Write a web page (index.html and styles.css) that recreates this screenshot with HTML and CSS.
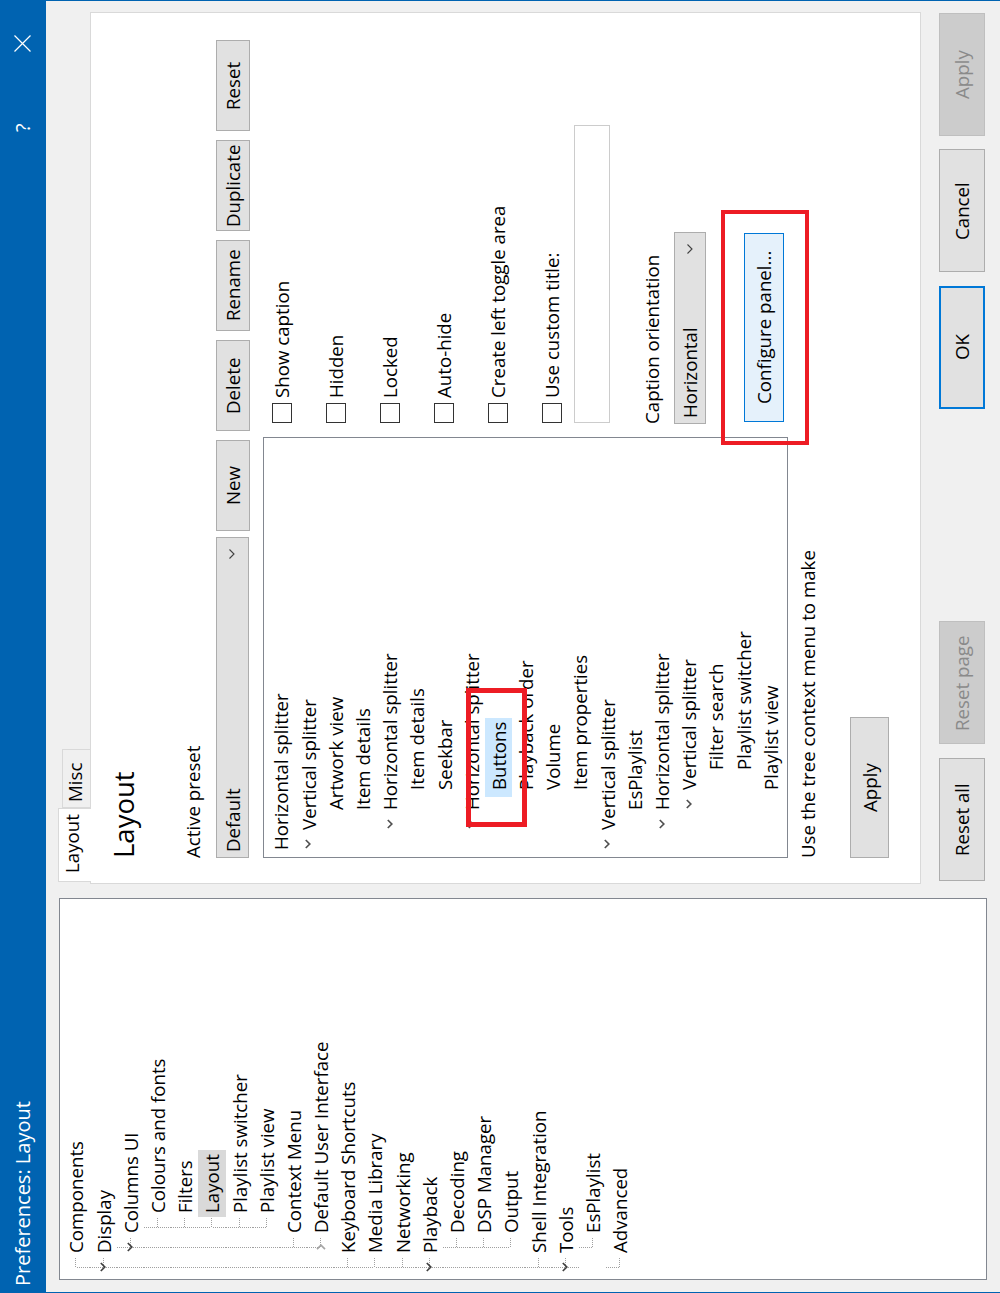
FILE: index.html
```html
<!DOCTYPE html>
<html lang="en">
<head>
<meta charset="utf-8">
<title>Preferences: Layout</title>
<link rel="stylesheet" href="styles.css">
</head>
<body>
<div class="dialog">
  <div class="titlebar">
    <span class="title">Preferences: Layout</span>
    <span class="help">?</span>
    <svg class="close" width="17" height="17" viewBox="0 0 17 17"><path d="M0.5 0.5L16.5 16.5M16.5 0.5L0.5 16.5"/></svg>
  </div>
  <div class="main">
    <div class="cats">
      <div class="trow"><span class="g f"></span><span class="lbl">Components</span></div>
      <div class="trow"><span class="g t"><svg class="chev" width="6" height="10" viewBox="0 0 6 10"><path d="M5.2 1L1.2 5l4 4"/></svg></span><span class="lbl">Display</span></div>
      <div class="trow"><span class="g v"></span><span class="g t"><svg class="chev" width="6" height="10" viewBox="0 0 6 10"><path d="M5.2 1L1.2 5l4 4"/></svg></span><span class="lbl">Columns UI</span></div>
      <div class="trow"><span class="g v"></span><span class="g v"></span><span class="g t"></span><span class="lbl">Colours and fonts</span></div>
      <div class="trow"><span class="g v"></span><span class="g v"></span><span class="g t"></span><span class="lbl">Filters</span></div>
      <div class="trow"><span class="g v"></span><span class="g v"></span><span class="g t"></span><span class="lbl sel-gray">Layout</span></div>
      <div class="trow"><span class="g v"></span><span class="g v"></span><span class="g t"></span><span class="lbl">Playlist switcher</span></div>
      <div class="trow"><span class="g v"></span><span class="g v"></span><span class="g l"></span><span class="lbl">Playlist view</span></div>
      <div class="trow"><span class="g v"></span><span class="g t"></span><span class="lbl">Context Menu</span></div>
      <div class="trow"><span class="g v"></span><span class="g l"><svg class="chev col" width="10" height="6" viewBox="0 0 10 6"><path d="M1 .8l4 4 4-4"/></svg></span><span class="lbl">Default User Interface</span></div>
      <div class="trow"><span class="g t"></span><span class="lbl">Keyboard Shortcuts</span></div>
      <div class="trow"><span class="g t"></span><span class="lbl">Media Library</span></div>
      <div class="trow"><span class="g t"></span><span class="lbl">Networking</span></div>
      <div class="trow"><span class="g t"><svg class="chev" width="6" height="10" viewBox="0 0 6 10"><path d="M5.2 1L1.2 5l4 4"/></svg></span><span class="lbl">Playback</span></div>
      <div class="trow"><span class="g v"></span><span class="g t"></span><span class="lbl">Decoding</span></div>
      <div class="trow"><span class="g v"></span><span class="g t"></span><span class="lbl">DSP Manager</span></div>
      <div class="trow"><span class="g v"></span><span class="g l"></span><span class="lbl">Output</span></div>
      <div class="trow"><span class="g t"></span><span class="lbl">Shell Integration</span></div>
      <div class="trow"><span class="g t"><svg class="chev" width="6" height="10" viewBox="0 0 6 10"><path d="M5.2 1L1.2 5l4 4"/></svg></span><span class="lbl">Tools</span></div>
      <div class="trow"><span class="g"></span><span class="g l"></span><span class="lbl">EsPlaylist</span></div>
      <div class="trow"><span class="g l"></span><span class="lbl">Advanced</span></div>
    </div>

    <div class="right">
      <div class="tabs">
        <div class="tab active">Layout</div>
        <div class="tab">Misc</div>
      </div>
      <div class="page">
        <h1 class="page-title">Layout</h1>
        <div class="label preset-label">Active preset</div>
        <div class="preset-row">
          <div class="combo preset"><span>Default</span><svg class="dd" width="6" height="10" viewBox="0 0 6 10"><path d="M5.5 .5L1 5l4.5 4.5"/></svg></div>
          <div class="btn top">New</div>
          <div class="btn top">Delete</div>
          <div class="btn top">Rename</div>
          <div class="btn top">Duplicate</div>
          <div class="btn top">Reset</div>
        </div>
        <div class="editor">
          <div class="ltree">
            <div class="lrow"><span class="lbl">Horizontal splitter</span></div>
            <div class="lrow"><span class="c"><svg class="chev dark" width="6" height="10" viewBox="0 0 6 10"><path d="M5.2 1L1.2 5l4 4"/></svg></span><span class="lbl">Vertical splitter</span></div>
            <div class="lrow"><span class="c"></span><span class="c"></span><span class="lbl">Artwork view</span></div>
            <div class="lrow"><span class="c"></span><span class="c"></span><span class="lbl">Item details</span></div>
            <div class="lrow"><span class="c"></span><span class="c"><svg class="chev dark" width="6" height="10" viewBox="0 0 6 10"><path d="M5.2 1L1.2 5l4 4"/></svg></span><span class="lbl">Horizontal splitter</span></div>
            <div class="lrow"><span class="c"></span><span class="c"></span><span class="c"></span><span class="lbl">Item details</span></div>
            <div class="lrow"><span class="c"></span><span class="c"></span><span class="c"></span><span class="lbl">Seekbar</span></div>
            <div class="lrow"><span class="c"></span><span class="c"><svg class="chev dark" width="6" height="10" viewBox="0 0 6 10"><path d="M5.2 1L1.2 5l4 4"/></svg></span><span class="lbl">Horizontal splitter</span></div>
            <div class="lrow"><span class="c"></span><span class="c"></span><span class="c"></span><span class="lbl sel-blue">Buttons</span></div>
            <div class="lrow"><span class="c"></span><span class="c"></span><span class="c"></span><span class="lbl">Playback order</span></div>
            <div class="lrow"><span class="c"></span><span class="c"></span><span class="c"></span><span class="lbl">Volume</span></div>
            <div class="lrow"><span class="c"></span><span class="c"></span><span class="c"></span><span class="lbl">Item properties</span></div>
            <div class="lrow"><span class="c"><svg class="chev dark" width="6" height="10" viewBox="0 0 6 10"><path d="M5.2 1L1.2 5l4 4"/></svg></span><span class="lbl">Vertical splitter</span></div>
            <div class="lrow"><span class="c"></span><span class="c"></span><span class="lbl">EsPlaylist</span></div>
            <div class="lrow"><span class="c"></span><span class="c"><svg class="chev dark" width="6" height="10" viewBox="0 0 6 10"><path d="M5.2 1L1.2 5l4 4"/></svg></span><span class="lbl">Horizontal splitter</span></div>
            <div class="lrow"><span class="c"></span><span class="c"></span><span class="c"><svg class="chev dark" width="6" height="10" viewBox="0 0 6 10"><path d="M5.2 1L1.2 5l4 4"/></svg></span><span class="lbl">Vertical splitter</span></div>
            <div class="lrow"><span class="c"></span><span class="c"></span><span class="c"></span><span class="c"></span><span class="lbl">Filter search</span></div>
            <div class="lrow"><span class="c"></span><span class="c"></span><span class="c"></span><span class="c"></span><span class="lbl">Playlist switcher</span></div>
            <div class="lrow"><span class="c"></span><span class="c"></span><span class="c"></span><span class="lbl">Playlist view</span></div>
          </div>
          <div class="opts">
            <div class="check"><span class="box"></span><span class="clabel">Show caption</span></div>
            <div class="check"><span class="box"></span><span class="clabel">Hidden</span></div>
            <div class="check"><span class="box"></span><span class="clabel">Locked</span></div>
            <div class="check"><span class="box"></span><span class="clabel">Auto-hide</span></div>
            <div class="check"><span class="box"></span><span class="clabel">Create left toggle area</span></div>
            <div class="check"><span class="box"></span><span class="clabel">Use custom title:</span></div>
            <div class="textbox"></div>
            <div class="label orient-label">Caption orientation</div>
            <div class="combo orient"><span>Horizontal</span><svg class="dd" width="6" height="10" viewBox="0 0 6 10"><path d="M5.5 .5L1 5l4.5 4.5"/></svg></div>
            <div class="btn configure">Configure panel...</div>
          </div>
        </div>
        <div class="label hint">Use the tree context menu to make</div>
        <div class="btn page-apply">Apply</div>
        <div class="mark mark-buttons"></div>
        <div class="mark mark-configure"></div>
      </div>
      <div class="actions">
        <div class="btn act">Reset all</div>
        <div class="btn act disabled">Reset page</div>
        <span class="spacer"></span>
        <div class="btn act ok">OK</div>
        <div class="btn act">Cancel</div>
        <div class="btn act disabled">Apply</div>
      </div>
    </div>
  </div>
</div>
</body>
</html>
```

FILE: styles.css
```css
* { box-sizing: border-box; }
html, body { margin: 0; padding: 0; overflow: hidden; }
body {
  width: 1000px;
  height: 1293px;
  background: #f0f0f0;
  font-family: "Segoe UI", "Open Sans", sans-serif;
  font-size: 18.7px;
  color: #000;
}

/* The dialog is laid out sideways: vertical-rl flow turned half a turn,
   so its text reads bottom-to-top like the screenshot. */
.dialog {
  writing-mode: vertical-rl;
  text-orientation: sideways;
  inline-size: 1293px;
  block-size: 1000px;
  transform: rotate(180deg);
  background: #f0f0f0;
  display: flex;
  flex-direction: column;
  box-shadow: inset 0 1px #0063b1, inset 0 -1px #0063b1;
}

/* title bar */
.titlebar {
  block-size: 46px;
  flex: none;
  background: #0063b1;
  color: #fff;
  display: flex;
  align-items: center;
  padding-inline-start: 7px;
  font-size: 20px;
  line-height: 46px;
}
.title { flex: 1; }
.help { inline-size: 9px; margin-inline-end: 71px; font-size: 20px; }
.close { flex: none; margin-inline-end: 35px; }
.close path { stroke: #fff; stroke-width: 1.2; fill: none; }

/* main area */
.main {
  flex: 1;
  display: flex;
  padding-block-start: 13px;
  padding-inline: 13px 12px;
  gap: 14px;
}

/* category tree */
.cats {
  flex: none;
  inline-size: 382px;
  block-size: 928px;
  background: #fff;
  border: 1px solid #828790;
  padding-block-start: 2.4px;
  padding-inline-start: 2px;
}
.trow, .lrow {
  display: flex;
  align-items: center;
  block-size: 27.2px;
  line-height: 27.2px;
  white-space: nowrap;
}
.lbl { padding-inline: 4px; block-size: 27.2px; }
.sel-gray { background: #d9d9d9; }
.sel-blue { background: #cce8ff; padding-inline-start: 7px; margin-inline-start: -3px; }

.g, .c {
  flex: none;
  inline-size: 20px;
  block-size: 100%;
  display: flex;
  align-items: center;
  justify-content: center;
}
/* connector lines (physical axes of the sideways cell) */
.v {
  background: linear-gradient(90deg, #a0a0a0 50%, transparent 0) 0 9px / 2px 1px repeat-x;
}
.t {
  background:
    linear-gradient(#fff, #fff) right 13px top 0 / 1px 10px no-repeat,
    linear-gradient(#a0a0a0 50%, transparent 0) right 13px top 0 / 1px 2px repeat-y,
    linear-gradient(90deg, #a0a0a0 50%, transparent 0) 0 9px / 2px 1px repeat-x;
}
.l {
  background:
    linear-gradient(#fff, #fff) 0 9px / 13px 1px no-repeat,
    linear-gradient(#fff, #fff) right 13px top 0 / 1px 10px no-repeat,
    linear-gradient(#a0a0a0 50%, transparent 0) right 13px top 0 / 1px 2px repeat-y,
    linear-gradient(90deg, #a0a0a0 50%, transparent 0) 0 9px / 2px 1px repeat-x;
}
.f {
  background:
    linear-gradient(#fff, #fff) right 0 top 9px / 13px 1px no-repeat,
    linear-gradient(#fff, #fff) right 13px top 0 / 1px 10px no-repeat,
    linear-gradient(#a0a0a0 50%, transparent 0) right 13px top 0 / 1px 2px repeat-y,
    linear-gradient(90deg, #a0a0a0 50%, transparent 0) 0 9px / 2px 1px repeat-x;
}
.chev { display: block; }
.chev path { fill: none; stroke: #404040; stroke-width: 1.7; }
.chev.col path { stroke: #a6a6a6; }
.chev.dark path { stroke: #505050; }

/* right side */
.right {
  inline-size: 872px;
  display: flex;
  flex-direction: column;
}
.tabs {
  display: flex;
  align-items: flex-end;
  block-size: 32px;
  padding-inline-start: 2px;
  margin-block-end: -1px;
}
.tab {
  border: 1px solid #d9d9d9;
  border-block-end: none;
  line-height: 24px;
  background: #f0f0f0;
  block-size: 29px;
  inline-size: 59px;
  padding-inline-start: 5px;
}
.tab.active {
  position: relative;
  z-index: 1;
  background: #fff;
  block-size: 33px;
  inline-size: 74px;
  padding-block-start: 1px;
  padding-inline-start: 8px;
}

.page {
  position: relative;
  block-size: 831px;
  flex: none;
  background: #fff;
  border: 1px solid #d9d9d9;
  padding-inline-start: 25px;
}
.page-title {
  margin: 0;
  margin-block-start: 15px;
  font-size: 27.5px;
  line-height: 36px;
  font-weight: normal;
}
.label { line-height: 24px; }
.preset-label { margin-block-start: 39px; }

.btn {
  display: flex;
  align-items: center;
  justify-content: center;
  flex: none;
  color: #000;
  background: #e1e1e1;
  border: 1px solid #adadad;
  line-height: 24px;
  white-space: nowrap;
}

.preset-row {
  display: flex;
  align-items: flex-start;
  margin-block-start: 11px;
  block-size: 34px;
}
.combo {
  display: flex;
  align-items: center;
  justify-content: space-between;
  background: #e1e1e1;
  border: 1px solid #adadad;
  padding-inline: 5px 11px;
  line-height: 24px;
}
.combo.preset { inline-size: 321px; block-size: 33px; margin-inline-end: 6px; }
.dd { display: block; }
.dd path { fill: none; stroke: #404040; stroke-width: 1.1; }
.btn.top { inline-size: 91px; block-size: 34px; margin-inline-end: 9px; }

.editor {
  display: flex;
  margin-block-start: 13px;
  block-size: 525px;
}
.ltree {
  inline-size: 421px;
  block-size: 525px;
  border: 1px solid #828790;
  padding-block-start: 3.4px;
  padding-inline-start: 3px;
}
.opts {
  margin-inline-start: 13px;
  padding-block-start: 9px;
  display: flex;
  flex-direction: column;
  align-items: flex-start;
}
.check {
  display: flex;
  align-items: center;
  block-size: 20px;
  margin-block-end: 34px;
  white-space: nowrap;
}
.check:nth-child(6) { margin-block-end: 12px; }
.box {
  inline-size: 20px;
  block-size: 20px;
  border: 1px solid #333;
  background: #fff;
  margin-inline-start: 1px;
}
.clabel { margin-inline-start: 5px; line-height: 24px; }
.textbox {
  inline-size: 298px;
  block-size: 36px;
  margin-inline-start: 1px;
  border: 1px solid #cccccc;
  background: #fff;
}
.orient-label { margin-block-start: 30px; }
.combo.orient { inline-size: 192px; block-size: 32px; margin-block-start: 10px; }
.btn.configure {
  inline-size: 189px;
  block-size: 40px;
  margin-block-start: 38px;
  margin-inline-start: 2px;
  background: #e5f1fb;
  border-color: #0078d7;
}

.hint { margin-block-start: 8px; }
.page-apply {
  inline-size: 141px;
  block-size: 39px;
  margin-block-start: 30px;
}

.mark {
  position: absolute;
  border: 4px solid #ed1c24;
}
.mark-buttons {
  inset-inline-start: 56px;
  inset-block-start: 375px;
  inline-size: 139px;
  block-size: 61px;
  border-width: 5px;
}
.mark-configure {
  inset-inline-start: 438px;
  inset-block-start: 630px;
  inline-size: 235px;
  block-size: 88px;
}

.actions {
  display: flex;
  margin-block-start: 18px;
  block-size: 46px;
  padding-inline: 3px 1px;
  gap: 13.5px;
}
.spacer { flex: 1; }
.btn.act { inline-size: 123px; block-size: 46px; }
.btn.disabled { background: #cccccc; border-color: #bfbfbf; color: #8a8a8a; }
.btn.ok { border: 2px solid #0078d7; }
```
